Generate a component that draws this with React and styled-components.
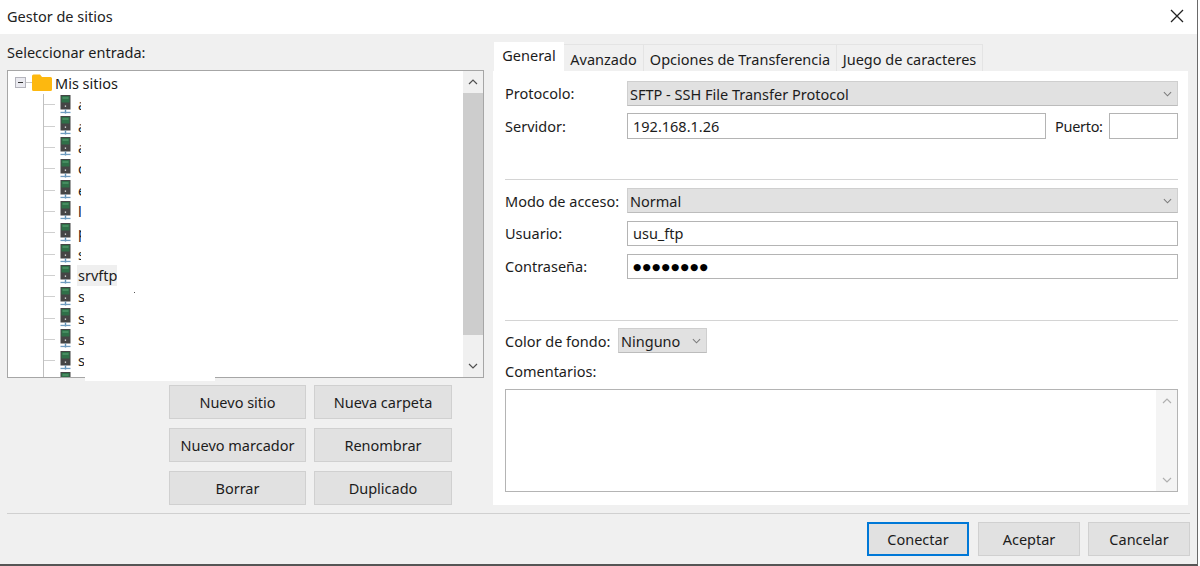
import React from "react";
import styled, { createGlobalStyle } from "styled-components";

const Global = createGlobalStyle`
  html, body { margin: 0; padding: 0; background: #fff; }
  body { font-family: "Noto Sans", "Open Sans", "Liberation Sans", sans-serif; font-size: 14.5px; color: #1c1c1c; }
  * { box-sizing: border-box; }
`;

const Page = styled.div`
  width: 1200px; height: 566px; background: #fff; overflow: hidden;
`;
const Window = styled.div`
  width: 1198px; height: 566px; display: flex; flex-direction: column;
  border-right: 1px solid #6a6a6a; border-bottom: 2px solid #555;
`;
const TitleBar = styled.div`
  height: 34px; flex: none; display: flex; align-items: center; justify-content: space-between;
  padding: 0 13px 2px 7px; background: #fff;
`;
const Title = styled.span` color: #222; `;
const CloseBtn = styled.span` display: flex; `;
const Body = styled.div`
  flex: 1; background: #f0f0f0; display: flex; flex-direction: column; padding: 0 7px;
`;
const Main = styled.div` display: flex; height: 471px; flex: none; `;
const LeftPane = styled.div` width: 477px; flex: none; display: flex; flex-direction: column; `;
const PaneLabel = styled.div` height: 36px; flex: none; padding-top: 7px; line-height: 22px; `;
const Tree = styled.div`
  position: relative; height: 308px; flex: none; display: flex; background: #fff;
  border: 1px solid #a6a6a6;
`;
const TreeList = styled.div` flex: 1; overflow: hidden; min-width: 0; `;
const RootRow = styled.div` height: 23px; display: flex; align-items: center; padding-left: 7px; `;
const Expander = styled.span`
  width: 11px; height: 11px; flex: none; display: flex; align-items: center; justify-content: center;
  border: 1px solid #b4b4bc; background: #eaeaf0;
  &::before { content: ""; width: 5px; height: 1px; background: #333; }
`;
const RootLink = styled.span` width: 6px; height: 1px; background: #c4c4c4; flex: none; `;
const RootLabel = styled.span` margin-left: 3px; color: #1a1a1a; `;
const Children = styled.div`
  margin-left: 35px; border-left: 1px solid #c0c0c0; height: 300px;
`;
const SiteRow = styled.div`
  height: 21.35px; display: flex; align-items: center;
  &::before { content: ""; width: 11px; height: 1px; background: #cfcfcf; flex: none; }
`;
const SiteIcon = styled.svg` margin-left: 5px; flex: none; `;
const SiteName = styled.span`
  margin-left: 6px; width: ${p => p.$w}px; flex: none; overflow: hidden; white-space: nowrap;
  line-height: 21px; padding-left: 1px;
  background: ${p => (p.$selected ? "#efefef" : "transparent")};
`;
const ScrollBar = styled.div`
  width: 20px; flex: none; background: #f0f0f0; display: flex; flex-direction: column; align-items: stretch;
`;
const ScrollArrow = styled.div`
  height: 22px; flex: none; display: flex; align-items: center; justify-content: center;
`;
const ScrollThumb = styled.div` height: 242px; flex: none; background: #cdcdcd; `;
const ScrollRest = styled.div` flex: 1; `;
const Redaction = styled.div`
  position: absolute; left: 77px; bottom: -4px; width: 130px; height: 4px; background: #fff;
`;
const Speck = styled.div`
  position: absolute; left: 126px; top: 221px; width: 1px; height: 1px; background: #555;
`;
const SideButtons = styled.div`
  margin: 7px 0 0 162px; display: grid; grid-template-columns: 137px 138px; grid-auto-rows: 34px; column-gap: 8px; row-gap: 9px;
`;
const Button = styled.button`
  font: inherit; color: #1c1c1c; background: #e1e1e1; padding: 0 0 1px; margin: 0;
  border: 1px solid ${p => (p.$primary ? "#0078d7" : "#d0d0d0")};
  ${p => (p.$primary ? "box-shadow: inset 0 0 0 1px #0078d7;" : "")}
`;
const RightPane = styled.div` margin-left: 9px; width: 695px; flex: none; padding-top: 8px; display: flex; flex-direction: column; `;
const Tabs = styled.div` display: flex; height: 29px; flex: none; align-items: flex-end; padding-left: 1px; `;
const Tab = styled.div`
  height: ${p => (p.$active ? 29 : 27)}px; width: ${p => p.$w}px; flex: none; text-align: center; white-space: nowrap;
  line-height: ${p => (p.$active ? 25 : 28)}px;
  background: ${p => (p.$active ? "#fff" : "#f0f0f0")};
  border: 1px solid ${p => (p.$active ? "#fff" : "#e4e4e4")};
  border-bottom: none; border-left-width: ${p => (p.$active ? 1 : 0)}px;
`;
const TabPanel = styled.div`
  flex: 1; background: #fff; padding: 10px 10px 0 12px; display: flex; flex-direction: column;
`;
const FieldRow = styled.div`
  display: flex; align-items: center; height: ${p => p.$h || 25}px; margin-top: ${p => p.$mt || 0}px; flex: none;
`;
const FieldLabel = styled.label`
  width: ${p => p.$w || 122}px; flex: none; white-space: nowrap; padding-bottom: ${p => p.$pb ?? 2}px;
`;
const Select = styled.div`
  flex: ${p => (p.$w ? "none" : 1)}; width: ${p => (p.$w ? `${p.$w}px` : "auto")}; height: 100%;
  display: flex; align-items: center; justify-content: space-between;
  padding: 0 5px 0 2px; background: #e1e1e1; border: 1px solid #cfcfcf; border-bottom-color: #bcbcbc;
`;
const Input = styled.input`
  font: inherit; color: #1c1c1c; height: 100%; padding: 0 5px 1px; margin: 0; outline: none; background: #fff;
  border: 1px solid #b4b4b4; min-width: 0;
  flex: ${p => (p.$w ? "none" : 1)}; width: ${p => (p.$w ? `${p.$w}px` : "auto")};
`;
const PasswordInput = styled(Input)`
  font-family: "DejaVu Sans", sans-serif; font-size: 9.4px; letter-spacing: 1.32px; color: #000; padding-bottom: 0;
`;
const PortLabel = styled.label`
  margin-left: 9px; width: 54px; letter-spacing: -0.3px; white-space: nowrap; flex: none;
`;
const ServerInput = styled(Input)` flex: none; width: 419px; `;
const Divider = styled.div`
  height: 1px; background: #d4d4d4; flex: none; margin-top: ${p => p.$mt}px; margin-bottom: ${p => p.$mb}px;
`;
const Comments = styled.div`
  height: 103px; flex: none; margin-top: 6px; display: flex; justify-content: flex-end; background: #fff;
  border: 1px solid #b4b4b4;
`;
const CommentScroll = styled.div`
  width: 21px; background: #f4f4f4; display: flex; flex-direction: column; justify-content: space-between;
`;
const Separator = styled.div` height: 1px; background: #d0d0d0; margin-top: 8px; flex: none; `;
const Footer = styled.div` display: flex; justify-content: flex-end; gap: 8px; margin-top: 8px; height: 34px; flex: none; `;
const FooterButton = styled(Button)` width: 102px; margin-right: ${p => p.$mr || 0}px; `;

const Chevron = ({ up, color = "#7c7c7c", size = 9 }) => (
  <svg width={size} height="6" viewBox="0 0 10 6" fill="none">
    <path d={up ? "M1 5 L5 1 L9 5" : "M1 1 L5 5 L9 1"} stroke={color} strokeWidth="1.2" />
  </svg>
);

const Server = () => (
  <SiteIcon width="11" height="20" viewBox="0 0 11 20">
    <rect x="0.5" y="0" width="10" height="14.5" fill="#454545" />
    <rect x="1.5" y="1" width="8" height="6.5" fill="#2f7048" />
    <rect x="2.5" y="2.5" width="6" height="1" fill="#5ea878" />
    <rect x="4.8" y="10.5" width="1.3" height="1.3" fill="#e8e8e8" />
    <rect x="4.8" y="14.5" width="1.4" height="4" fill="#5d8fb5" />
    <rect x="0.5" y="16.8" width="10" height="1.3" fill="#6f9cc0" />
  </SiteIcon>
);

const Folder = () => (
  <svg width="20" height="18" viewBox="0 0 20 18" style={{ flex: "none" }}>
    <path d="M0 2 Q0 0.5 1.5 0.5 H8 L10 3 H18.5 Q20 3 20 4.5 V15.5 Q20 17 18.5 17 H1.5 Q0 17 0 15.5 Z" fill="#fdb80f" />
  </svg>
);

const sites = [
  ["a", 4], ["a", 4], ["a", 4], ["c", 4], ["e", 4], ["l", 4], ["p", 4], ["s", 4],
  ["srvftp", 40, true], ["s", 7], ["s", 7], ["s", 7], ["s", 7], ["", 4],
];

export default function App() {
  return (
    <Page>
      <Global />
      <Window>
        <TitleBar>
          <Title>Gestor de sitios</Title>
          <CloseBtn>
            <svg width="14" height="14" viewBox="0 0 14 14" fill="none">
              <path d="M1 1 L13 13 M13 1 L1 13" stroke="#222" strokeWidth="1.3" />
            </svg>
          </CloseBtn>
        </TitleBar>
        <Body>
          <Main>
            <LeftPane>
              <PaneLabel>Seleccionar entrada:</PaneLabel>
              <Tree>
                <TreeList>
                  <RootRow>
                    <Expander />
                    <RootLink />
                    <Folder />
                    <RootLabel>Mis sitios</RootLabel>
                  </RootRow>
                  <Children>
                    {sites.map(([name, w, sel], i) => (
                      <SiteRow key={i}>
                        <Server />
                        <SiteName $w={w} $selected={sel}>{name}</SiteName>
                      </SiteRow>
                    ))}
                  </Children>
                </TreeList>
                <ScrollBar>
                  <ScrollArrow><Chevron up color="#505050" size={10} /></ScrollArrow>
                  <ScrollThumb />
                  <ScrollRest />
                  <ScrollArrow><Chevron color="#505050" size={10} /></ScrollArrow>
                </ScrollBar>
                <Redaction />
                <Speck />
              </Tree>
              <SideButtons>
                <Button>Nuevo sitio</Button>
                <Button>Nueva carpeta</Button>
                <Button>Nuevo marcador</Button>
                <Button>Renombrar</Button>
                <Button>Borrar</Button>
                <Button>Duplicado</Button>
              </SideButtons>
            </LeftPane>
            <RightPane>
              <Tabs>
                <Tab $active $w={70}>General</Tab>
                <Tab $w={80}>Avanzado</Tab>
                <Tab $w={193}>Opciones de Transferencia</Tab>
                <Tab $w={146}>Juego de caracteres</Tab>
              </Tabs>
              <TabPanel>
                <FieldRow>
                  <FieldLabel>Protocolo:</FieldLabel>
                  <Select>SFTP - SSH File Transfer Protocol<Chevron /></Select>
                </FieldRow>
                <FieldRow $h={26} $mt={7}>
                  <FieldLabel $pb={0}>Servidor:</FieldLabel>
                  <ServerInput readOnly value="192.168.1.26" />
                  <PortLabel>Puerto:</PortLabel>
                  <Input readOnly value="" $w={69} />
                </FieldRow>
                <Divider $mt={40} $mb={8} />
                <FieldRow>
                  <FieldLabel $pb={0}>Modo de acceso:</FieldLabel>
                  <Select>Normal<Chevron /></Select>
                </FieldRow>
                <FieldRow $mt={8}>
                  <FieldLabel>Usuario:</FieldLabel>
                  <Input readOnly value="usu_ftp" />
                </FieldRow>
                <FieldRow $mt={8}>
                  <FieldLabel>Contraseña:</FieldLabel>
                  <PasswordInput readOnly value="●●●●●●●●" />
                </FieldRow>
                <Divider $mt={41} $mb={7} />
                <FieldRow>
                  <FieldLabel $w={113} $pb={0}>Color de fondo:</FieldLabel>
                  <Select $w={89}>Ninguno<Chevron /></Select>
                </FieldRow>
                <FieldRow $h={22} $mt={8}>
                  <FieldLabel>Comentarios:</FieldLabel>
                </FieldRow>
                <Comments>
                  <CommentScroll>
                    <ScrollArrow><Chevron up color="#b0b0b0" size={10} /></ScrollArrow>
                    <ScrollArrow><Chevron color="#b0b0b0" size={10} /></ScrollArrow>
                  </CommentScroll>
                </Comments>
              </TabPanel>
            </RightPane>
          </Main>
          <Separator />
          <Footer>
            <FooterButton $primary $mr={1}>Conectar</FooterButton>
            <FooterButton>Aceptar</FooterButton>
            <FooterButton>Cancelar</FooterButton>
          </Footer>
        </Body>
      </Window>
    </Page>
  );
}
